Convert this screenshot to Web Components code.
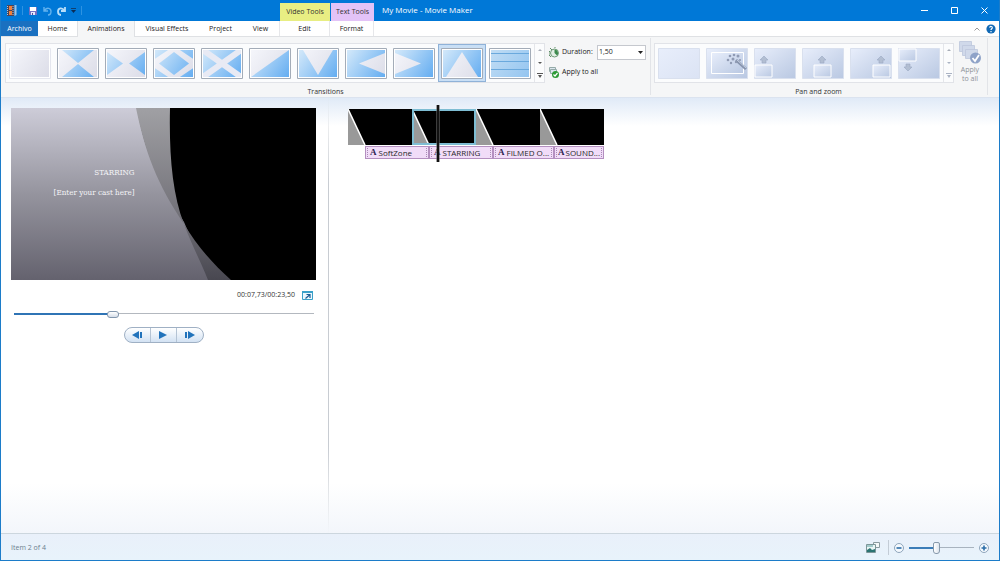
<!DOCTYPE html>
<html lang="es">
<head>
<meta charset="utf-8">
<title>My Movie - Movie Maker</title>
<style>
  html, body { margin: 0; height: 100%; }
  body { font: 7px/12px "Open Sans", "Noto Sans", sans-serif; color: #222; overflow: hidden; }
</style>
</head>
<body>
<mm-app></mm-app>
<script>
const reset = `
  *, *::before, *::after { box-sizing: border-box; }
  button { font: inherit; color: inherit; background: none; border: 0; padding: 0; margin: 0; }
  svg { display: block; }
`;
function define(name, css, html) {
  customElements.define(name, class extends HTMLElement {
    constructor() {
      super();
      const t = document.createElement('template');
      t.innerHTML = `<style>:host { box-sizing: border-box; }${reset}${css}</style>` + (typeof html === 'function' ? html(this) : html);
      this.attachShadow({ mode: 'open' }).append(t.content.cloneNode(true));
    }
  });
}

/* Title bar */
define('mm-titlebar', `
  :host { display: flex; height: 21px; background: #0078d7; color: #fff; font-size: 8px; }
  .quick { width: 279px; display: flex; align-items: center; padding-left: 5px; gap: 5px; }
  .bar { width: 1px; height: 9px; background: #2d93e2; }
  .ctx { margin-top: 3px; line-height: 18px; text-align: center; font-size: 7px; color: #333; }
  .video { width: 50px; background: #e8ee83; }
  .text { width: 43px; background: #e3c3f7; margin-left: 1px; }
  h1 { margin: 0 0 0 8px; font-size: 8px; font-weight: 400; line-height: 20px; flex: 1; white-space: nowrap; }
  .win { display: flex; }
  .win button { width: 30px; display: grid; place-items: center; }
`, `
  <div class="quick">
    <svg width="11" height="11" viewBox="0 0 11 11"><path d="M1 0h7v11H1z" fill="#4b4356"/><path d="M3 1h3v4H3zM3 6h3v4H3z" fill="#f0803a"/><path d="M1.500 1v9M7 1v9" stroke="#b9c4d3" stroke-dasharray="1 1"/><path d="M8.500 0h2v10l-2 1z" fill="#9fc4e8"/></svg>
    <span class="bar"></span>
    <button aria-label="Save"><svg width="10" height="8" viewBox="-1 0 10 8"><path d="M0 0h8v8H0z" fill="#7771c3"/><path d="M1 0h6v4H1z" fill="#fff"/><path d="M2 5h4v3H2z" fill="#e6e8fa"/><path d="M3 6h1v2H3z" fill="#554d9c"/></svg></button>
    <button aria-label="Undo"><svg width="9" height="10" viewBox="0 0 9 10"><path d="M1 1v4h4M1.500 4.500C4 1 8 2 8 5.500 8 7.500 7 9 5 9" fill="none" stroke="#62b2ef" stroke-width="1.400"/></svg></button>
    <button aria-label="Redo"><svg width="9" height="10" viewBox="0 0 9 10"><path d="M8 1v4H4M7.500 4.500C5 1 1 2 1 5.500 1 7.500 2 9 4 9" fill="none" stroke="#b9def9" stroke-width="1.800"/></svg></button>
    <button aria-label="Customize"><svg width="5" height="6" viewBox="0 0 5 6"><path d="M0 .5h5" stroke="#123f70"/><path d="M0 2h5L2.500 5z" fill="#0b2c55"/></svg></button>
    <span class="bar"></span>
  </div>
  <div class="ctx video">Video Tools</div>
  <div class="ctx text">Text Tools</div>
  <h1>My Movie - Movie Maker</h1>
  <div class="win">
    <button aria-label="Minimize"><svg width="7" height="7"><path d="M0 3.500h7" stroke="#fff"/></svg></button>
    <button aria-label="Maximize"><svg width="7" height="7"><path d="M.5.5h6v6h-6z" fill="none" stroke="#fff"/></svg></button>
    <button aria-label="Close"><svg width="7" height="7"><path d="M.5.5l6 6M6.500.5l-6 6" stroke="#fff"/></svg></button>
  </div>
`);

/* Ribbon tabs */
define('mm-tabs', `
  :host { display: flex; height: 16px; background: #fff; border-bottom: 1px solid #dfe1e4; }
  button { height: 15px; line-height: 15px; white-space: nowrap; text-align: center; }
  .file { width: 37px; background: #1a70c0; color: #fff; }
  .home { width: 39px; }
  .on { width: 58px; height: 16px; padding-bottom: 1px; background: #f5f6f7; border: solid #dfe1e4; border-width: 0 1px; }
  .vis { width: 64px; }
  .prj { width: 43px; }
  .view { width: 37px; }
  .edit { width: 51px; border: solid #e6e7ea; border-width: 0 1px; }
  .fmt { width: 44px; border-right: 1px solid #e6e7ea; }
  .end { margin-left: auto; display: flex; align-items: center; gap: 6px; padding-right: 3px; }
  .end button { height: 10px; }
`, `
  <button class="file">Archivo</button><button class="home">Home</button><button class="on">Animations</button><button class="vis">Visual Effects</button><button class="prj">Project</button><button class="view">View</button><button class="edit">Edit</button><button class="fmt">Format</button>
  <div class="end">
    <button aria-label="Collapse ribbon"><svg width="6" height="10"><path d="M.5 6.500L3 4l2.500 2.500" fill="none" stroke="#999"/></svg></button>
    <button aria-label="Help"><svg width="10" height="10" viewBox="0 0 10 10"><circle cx="5" cy="5" r="4.600" fill="#1169b5"/><path d="M3.600 3.600C4 1.900 6.600 2.200 6.200 4 6 4.800 5 4.800 5 6M5 7v1.200" fill="none" stroke="#fff" stroke-width="1.200"/></svg></button>
  </div>
`);

/* Transition thumbnails: pale shapes (l) over a blue gradient (b) */
const full = '<path d="M2 2h38v27H2z" fill="url(#b)"/>';
const thumb = {
  none: '',
  topbottom: '<path d="M5 2h32L21 15zM5 29h32L21 16z" fill="url(#b)"/>',
  leftright: '<path d="M2 4v23l16-11.500zM40 4v23L24 15.500z" fill="url(#b)"/>',
  diamond: full + '<path d="M21-2L47 15.500 21 33-5 15.500z" fill="url(#l)"/><path d="M2 2h10L2 9zM40 2H30l10 7zM2 29h10L2 22zM40 29H30l10-7z" fill="url(#b)"/><path d="M21 4l15 11.500L21 27 6 15.500z" fill="url(#b)"/>',
  cross: full + '<path d="M2 2l38 27M40 2L2 29" stroke="#e8eaf4" stroke-width="6"/>',
  diagonal: '<path d="M40 2v27H2z" fill="url(#b)"/>',
  down: full + '<path d="M6 2h30L21 27z" fill="url(#l)"/>',
  left: full + '<path d="M40 5v21L14 15.500z" fill="url(#l)"/>',
  right: full + '<path d="M2 5v21l26-10.500z" fill="url(#l)"/>',
  up: full + '<path d="M5 29h32L21 4z" fill="url(#l)"/>',
  lines: '<path d="M2 2h38v27H2z" fill="#b4d5f0"/><path d="M2 2h38v27H2z" fill="url(#b)" opacity=".4"/><path d="M2 5.500h38M2 13.500h38M2 21.500h38" stroke="#6aa9dd"/>'
};
define('mm-transition', `
  :host { display: block; padding: 3px 2px; border: 1px solid transparent; width: 48px; height: 38px; }
  :host([selected]) { background: #c9dff5; border-color: #8fb2d8; }
  button { width: 42px; height: 31px; display: block; }
`, el => {
  const k = el.getAttribute('kind');
  return `<button aria-label="${k}"><svg width="42" height="31" viewBox="0 0 42 31">
    <defs>
      <linearGradient id="b" gradientUnits="userSpaceOnUse" x1="2" y1="2" x2="40" y2="29"><stop stop-color="#d4e9fa"/><stop offset="1" stop-color="#64adf1"/></linearGradient>
      <linearGradient id="l" gradientUnits="userSpaceOnUse" x1="2" y1="2" x2="40" y2="29"><stop stop-color="#f5f6fb"/><stop offset="1" stop-color="#dcdde8"/></linearGradient>
      <clipPath id="c"><path d="M2 2h38v27H2z"/></clipPath>
    </defs>
    <path d="M.5.5h41v30H.5z" fill="#fff" stroke="${k === 'none' ? '#e4e6ee' : '#a3acb8'}"/><g clip-path="url(#c)"><path d="M2 2h38v27H2z" fill="url(#l)"/>${thumb[k]}</g>
  </svg></button>`;
});

const arrowUp = (x, y) => `<path d="M${x} ${y}l4 4h-2v3h-4v-3h-2z" fill="#b2bed2" stroke="#9aa9c3" stroke-width=".6"/>`;
const arrowDown = (x, y) => `<path d="M${x} ${y}l4-4h-2v-3h-4v3h-2z" fill="#b2bed2" stroke="#9aa9c3" stroke-width=".6"/>`;
const box = (x, y) => `<path d="M${x} ${y}h17v12H${x}z" fill="url(#p)" stroke="#fff"/>`;
const pan = {
  none: '',
  auto: '<path d="M5.500 4.500h32v21h-32z" fill="url(#p)" stroke="#fff"/><path d="M30 12l10 9" stroke="#8794ae" stroke-width="3"/><path d="M31 12l9 8" stroke="#c3cee0" stroke-width="1"/><g fill="#909bb4"><circle cx="24" cy="8" r="1.300"/><circle cx="28" cy="7" r="1.300"/><circle cx="32" cy="8" r="1.500"/><circle cx="22" cy="12" r="1.300"/><circle cx="27" cy="11" r="1.500"/><circle cx="25" cy="15" r="1.200"/><circle cx="30" cy="14" r="1.200"/><circle cx="34" cy="12" r="1.100"/></g>',
  bl: box(1, 17) + arrowUp(10, 8),
  bc: box(12, 17) + arrowUp(20, 8),
  br: box(23, 17) + arrowUp(31, 8),
  tl: box(1, 1) + arrowDown(10, 23)
};
define('mm-pan', `
  :host { display: block; padding: 4px 3px; width: 48px; height: 38px; }
  button { width: 42px; height: 31px; display: block; }
`, el => {
  const k = el.getAttribute('kind');
  return `<button aria-label="${k}"><svg width="42" height="31" viewBox="0 0 42 31">
    <defs><linearGradient id="p" x1="0" y1="0" x2="1" y2="1"><stop stop-color="#e8eefb"/><stop offset="1" stop-color="${k === 'none' ? '#dbe3f4' : '#b9c8e2'}"/></linearGradient></defs>
    <path d="M.5.5h41v30H.5z" fill="url(#p)" stroke="#d9e0ee"/>${pan[k]}
  </svg></button>`;
});

define('mm-gallery', `
  :host { display: flex; height: 40px; border: 1px solid #e1e3e8; background: #fbfcfd; }
  .scroll { width: 10px; border-left: 1px solid #e4e6ea; display: flex; flex-direction: column; justify-content: space-around; align-items: center; color: #555; }
  :host([dim]) .scroll { color: #aab3c4; }
  .scroll button { width: 9px; height: 12px; display: grid; place-items: center; }
`, `
  <slot></slot>
  <div class="scroll">
    <button aria-label="Previous row"><svg width="4" height="4"><path d="M0 3l2-2 2 2z" fill="#a8adb8"/></svg></button>
    <button aria-label="Next row"><svg width="4" height="4"><path d="M0 1h4L2 3z" fill="currentColor"/></svg></button>
    <button aria-label="More"><svg width="6" height="6"><path d="M0 .5h6" stroke="currentColor"/><path d="M1 2h4L3 5z" fill="currentColor"/></svg></button>
  </div>
`);

/* Ribbon group: content above, caption below */
define('mm-group', `
  :host { display: flex; flex-direction: column; border-right: 1px solid #e2e4e8; padding: 5px 4px 0; height: 57px; }
  .row { display: flex; gap: 4px; flex: 0 0 42px; align-items: flex-start; }
  .cap { text-align: center; line-height: 14px; color: #333; }
`, el => `<div class="row"><slot></slot></div><div class="cap">${el.getAttribute('caption')}</div>`);

define('mm-duration', `
  :host { display: flex; flex-direction: column; gap: 6px; padding-top: 2px; }
  .line { display: flex; align-items: center; height: 14px; gap: 3px; }
  .line svg { flex: none; }
  .field { position: relative; margin-left: auto; }
  select { appearance: none; width: 49px; height: 15px; display: block; border: 1px solid #c5c8ce; border-radius: 0; background: #fff; color: #222; font: inherit; padding: 0 1px; margin: 0; }
  .field svg { position: absolute; right: 3px; top: 6px; pointer-events: none; }
`, `
  <div class="line">
    <svg width="10" height="11" viewBox="0 0 10 11"><circle cx="5.500" cy="6" r="4" fill="#e3efe6" stroke="#6f9c78"/><path d="M5.500 6V2.500A3.500 3.500 0 0 1 8 8.500z" fill="#3c8a4d"/><path d="M1 4l-1 1v3l2 2M5 0h2M1 1l2 2" stroke="#5e8d68" fill="none"/></svg>
    <label for="dur">Duration:</label>
    <div class="field"><select id="dur"><option>1,50</option></select><svg width="5" height="3"><path d="M0 0h5L2.500 3z" fill="#222"/></svg></div>
  </div>
  <button class="line">
    <svg width="10" height="11" viewBox="0 0 10 11"><path d="M.5.5h6v4h-6z" fill="#dbe6ee" stroke="#94aaa8"/><path d="M1.500 2.500h6v4h-6z" fill="#dbe6ee" stroke="#94aaa8"/><circle cx="6.500" cy="7.500" r="3.500" fill="#2b9a35"/><path d="M4.500 7.500L6 9l2.500-3" stroke="#fff" fill="none" stroke-width="1.200"/></svg>
    Apply to all
  </button>
`);

define('mm-ribbon', `
  :host { display: flex; height: 61px; background: #f5f6f7; padding-top: 1px; border-bottom: 1px solid #dbe3ef; }
  .tr { width: 650px; flex: none; }
  .tr mm-duration { width: 97px; }
  .pz { width: 337px; flex: none; padding-left: 3px; }
  .all { width: 24px; color: #8e9299; line-height: 9px; text-align: center; margin-top: -2px; }
  .all svg { margin: 0 auto 1px; }
`, `
  <mm-group class="tr" caption="Transitions">
    <mm-gallery>
      ${['none', 'topbottom', 'leftright', 'diamond', 'cross', 'diagonal', 'down', 'left', 'right', 'up', 'lines'].map(k => `<mm-transition kind="${k}"${k === 'up' ? ' selected' : ''}></mm-transition>`).join('')}
    </mm-gallery>
    <mm-duration></mm-duration>
  </mm-group>
  <mm-group class="pz" caption="Pan and zoom">
    <mm-gallery dim>
      ${['none', 'auto', 'bl', 'bc', 'br', 'tl'].map(k => `<mm-pan kind="${k}"></mm-pan>`).join('')}
    </mm-gallery>
    <button class="all" disabled>
      <svg width="22" height="23" viewBox="0 0 22 23"><g fill="#d0d9ea" stroke="#bcc7dc" stroke-width=".8"><path d="M.5.500h12v10H.5z"/><path d="M3.500 4.500h12v10h-12z"/><path d="M6.500 8.500h12v9h-12z"/></g><circle cx="16.500" cy="17" r="5.500" fill="#8fa3c8"/><path d="M13.500 17l2.500 3 4-6" stroke="#fff" stroke-width="1.800" fill="none"/></svg>
      Apply<br>to all
    </button>
  </mm-group>
`);

/* Preview monitor */
define('mm-preview', `
  :host { display: block; padding: 10px 12px 0 10px; }
  .screen { position: relative; aspect-ratio: 305 / 172; }
  .screen > svg { width: 100%; height: 100%; }
  .credits { position: absolute; right: 59.500%; top: 35%; color: #f4f4f7; text-align: right; font: 8px/10px "DejaVu Serif Condensed", "DejaVu Serif", serif; white-space: nowrap; }
  .credits p { margin: 0 0 10px; }
  .time { display: flex; justify-content: flex-end; align-items: center; gap: 7px; padding: 9px 3px 0 0; height: 21px; color: #333; }
  input { appearance: none; display: block; width: calc(100% - 5px); height: 8px; margin: 9px 0 0 3px; background: linear-gradient(#2f74b5 0 0) 0 3px / 33% 2px no-repeat, linear-gradient(#b3b8bf 0 0) 0 3px / 100% 1px no-repeat; }
  input::-webkit-slider-thumb { appearance: none; width: 12px; height: 7px; border: 1px solid #8296ad; border-radius: 3px; background: linear-gradient(#fff, #d5dde8); }
  .keys { display: flex; width: 80px; height: 16px; margin: 9px auto 0; border: 1px solid #9fb0c4; border-radius: 8px; background: linear-gradient(#fff, #d3e2f3); }
  .keys button { flex: 1; display: grid; place-items: center; }
  .keys button + button { border-left: 1px solid #b4c3d4; }
`, `
  <div class="screen">
    <svg viewBox="0 0 305 172" preserveAspectRatio="none">
      <defs>
        <linearGradient id="s" x1="0" y1="0" x2="0" y2="1"><stop stop-color="#cdccd8"/><stop offset=".5" stop-color="#95949e"/><stop offset="1" stop-color="#64626e"/></linearGradient>
        <linearGradient id="d" x1="0" y1="0" x2="0" y2="1"><stop stop-color="#a0a0a4"/><stop offset=".6" stop-color="#74737a"/><stop offset="1" stop-color="#484750"/></linearGradient>
      </defs>
      <path d="M0 0h305v172H0z" fill="#000"/>
      <path d="M0 0h126C134 45 147 72 173 114L198 172H0z" fill="url(#s)"/>
      <path d="M125 0h34C158 45 161 85 173 116 146 76 134 44 125 0zM173 116C186 138 202 156 220 172H197C190 154 181 138 173 116z" fill="url(#d)"/>
    </svg>
    <div class="credits"><p>STARRING</p><p>[Enter your cast here]</p></div>
  </div>
  <div class="time"><span>00:07,73/00:23,50</span>
    <button aria-label="Full screen"><svg width="11" height="9" viewBox="0 0 11 9"><path d="M.5.5h10v8H.5z" fill="#eaf7fd" stroke="#3aa0c9"/><path d="M0 1h11" stroke="#3aa0c9" stroke-width="2"/><path d="M3.500 7.500L7.500 4M4.500 3.500H8V7" stroke="#1c5b94" stroke-width="1.200" fill="none"/></svg></button>
  </div>
  <input type="range" min="0" max="1000" value="323" aria-label="Playback position">
  <div class="keys">
    <button aria-label="Previous frame"><svg width="11" height="8"><path d="M7 0v8L0 4z" fill="#2273bb"/><path d="M8 1h2v6H8z" fill="#2273bb"/></svg></button>
    <button aria-label="Play"><svg width="8" height="8"><path d="M0 0v8l8-4z" fill="#2273bb"/></svg></button>
    <button aria-label="Next frame"><svg width="11" height="8"><path d="M4 0v8l7-4z" fill="#2273bb"/><path d="M1 1h2v6H1z" fill="#2273bb"/></svg></button>
  </div>
`);

/* Storyboard */
define('mm-clip', `
  :host { display: block; width: 64px; height: 36px; background: #000; }
  :host([selected]) { outline: 2px solid #7ebdd3; outline-offset: -2px; }
`, `<svg width="64" height="36"><path d="M0 0l17 36H0z" fill="#999"/><path d="M0 0l17 36" stroke="#fff" stroke-width="1.500"/></svg>`);
define('mm-caption', `
  :host { display: flex; height: 13px; border: 1px solid #b48fc0; background: #f1dcf8; color: #2a2a2a; padding: 0 1px; align-items: center; gap: 2px; font-size: 8px; line-height: 11px; white-space: nowrap; }
  :host::before, :host::after { content: ""; align-self: stretch; border-left: 1px dotted #a98bb5; margin: 1px 0; }
  :host::after { margin-left: auto; }
  :host(:last-child) { gap: 1px; }
  b { font: bold 9px/11px "Liberation Serif", serif; color: #2c2350; }
`, `<b>A</b><span><slot></slot></span>`);
define('mm-storyboard', `
  :host { display: block; padding: 11px 19px; }
  .track { position: relative; width: 256px; }
  .clips, .texts { display: flex; }
  .texts { margin-top: 1px; padding-left: 17px; }
  .w64 { width: 64px; } .w61 { width: 61px; } .w50 { width: 50px; }
  .head { position: absolute; left: 88px; top: -4px; width: 4px; height: 57px; border: solid #6669; border-width: 0 1px; background: #111; background-clip: padding-box; }
`, `
  <div class="track">
    <div class="clips"><mm-clip></mm-clip><mm-clip selected></mm-clip><mm-clip></mm-clip><mm-clip></mm-clip></div>
    <div class="texts"><mm-caption class="w64">SoftZone</mm-caption><mm-caption class="w64">STARRING</mm-caption><mm-caption class="w61">FILMED O...</mm-caption><mm-caption class="w50">SOUND...</mm-caption></div>
    <div class="head"></div>
  </div>
`);

define('mm-status', `
  :host { display: flex; align-items: center; height: 27px; padding: 1px 10px 0; border-top: 1px solid #ccd6de; background: linear-gradient(#e9f0fa, #e8f3fb); color: #6c7f90; }
  .end { margin-left: auto; display: flex; align-items: center; gap: 5px; }
  .sep { width: 1px; height: 15px; background: #c3ccd6; margin-left: 3px; }
  input { appearance: none; width: 65px; height: 14px; margin: 0; background: linear-gradient(#3b7db8 0 0) 0 6px / 42% 2px no-repeat, linear-gradient(#a8b3bf 0 0) 0 6px / 100% 1px no-repeat; }
  input::-webkit-slider-thumb { appearance: none; width: 7px; height: 12px; border: 1px solid #8799ab; border-radius: 2px 2px 3px 3px; background: linear-gradient(90deg, #fff, #dde5ee); }
`, `
  <span>Item 2 of 4</span>
  <div class="end">
    <button aria-label="Thumbnail size"><svg width="14" height="12" viewBox="0 0 14 12"><path d="M7.500.5h6v5h-6z" fill="#f4f8f9" stroke="#8a9ba0"/><path d="M.5 2.500h9v8h-9z" fill="#eaf5f5" stroke="#7d9699"/><path d="M1 8l3-2 2 2 3-1v3H1z" fill="#2b7472"/><path d="M1 4h6" stroke="#5aa0a2"/></svg></button>
    <span class="sep"></span>
    <button aria-label="Zoom out"><svg width="10" height="10"><circle cx="5" cy="5" r="4.500" fill="#f4f9fe" stroke="#8ea5bb"/><path d="M2.500 5h5" stroke="#2a6da8" stroke-width="1.600"/></svg></button>
    <input type="range" min="0" max="100" value="41" aria-label="Zoom">
    <button aria-label="Zoom in"><svg width="10" height="10"><circle cx="5" cy="5" r="4.500" fill="#f4f9fe" stroke="#8ea5bb"/><path d="M2.500 5h5M5 2.500v5" stroke="#2a6da8" stroke-width="1.600"/></svg></button>
  </div>
`);

define('mm-app', `
  :host { display: flex; flex-direction: column; height: 100vh; border: 1px solid #1c7cc9; border-top: 0; }
  main { flex: 1; min-height: 0; display: grid; grid-template-columns: 328fr 670fr; background: linear-gradient(#e0eaf7, #fff 28px, #fff calc(100% - 50px), #f3f6fb); }
  mm-preview { border-right: 1px solid; border-image: linear-gradient(transparent, #c8ccd2 20%, #c8ccd2 80%, transparent) 1; }
`, `
  <mm-titlebar></mm-titlebar>
  <mm-tabs></mm-tabs>
  <mm-ribbon></mm-ribbon>
  <main><mm-preview></mm-preview><mm-storyboard></mm-storyboard></main>
  <mm-status></mm-status>
`);
</script>
</body>
</html>
